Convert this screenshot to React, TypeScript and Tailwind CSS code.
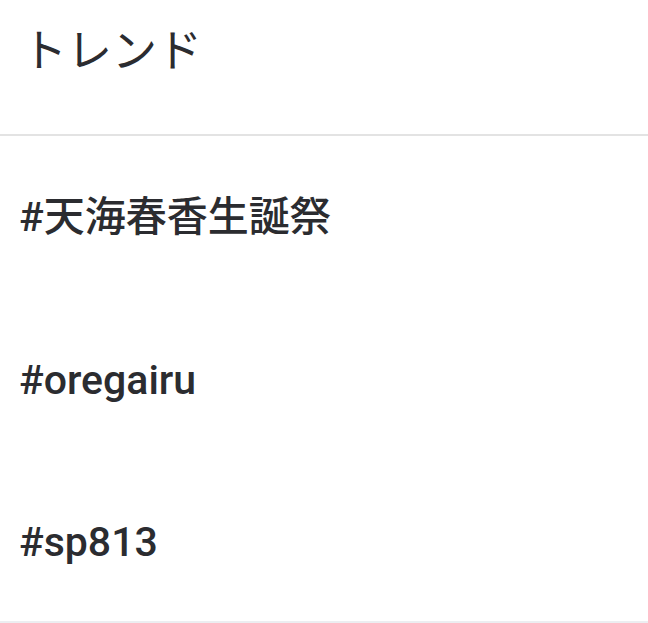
const trends: string[] =
[
	"#天海春香生誕祭",
	"#oregairu",
	"#sp813",
];

export default function App()
{
	return (
		<div className="w-[648px] h-[623px] bg-white overflow-hidden flex flex-col" style={{ fontFamily: "Roboto, 'Noto Sans CJK JP', sans-serif" }}>

			{/* Header */}
			<div className="h-[136px] shrink-0 pl-[22px] pt-[23px] border-b-2 border-[#e3e3e3]">
				<h1 className="text-[45px] leading-[58px] font-normal text-[#2b2c30]">トレンド</h1>
			</div>

			{/* Trend rows */}
			{trends.map((tag, i) => (
				<div
					key={i}
					className={i === trends.length - 1
						? "h-[161px] shrink-0 flex items-center pl-[19px] pt-[3px] border-b-2 border-[#eceef1]"
						: "h-[163px] shrink-0 flex items-center pl-[19px]"}
				>
					<span className="text-[41px] font-medium text-[#2b2c30]">{tag}</span>
				</div>
			))}
		</div>
	);
}
